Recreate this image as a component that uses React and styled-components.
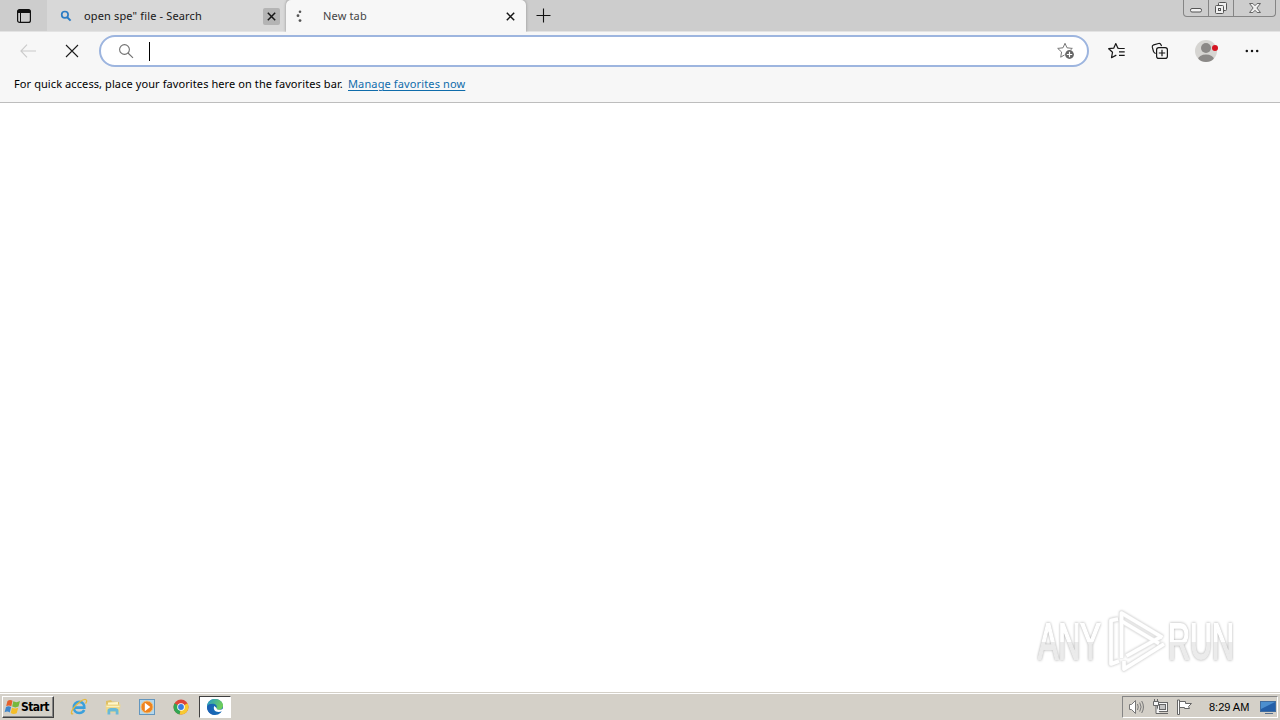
import React from "react";
import styled, { createGlobalStyle } from "styled-components";

const App = () => {
  return (
    <Screen>
      <GlobalStyle />
      <TabStrip>
        <TabActions>
          <TabMenuIcon />
        </TabActions>
        <Tab>
          <SearchFavicon />
          <TabTitle>open spe" file - Search</TabTitle>
          <CloseButton $hovered>
            <CrossIcon />
          </CloseButton>
        </Tab>
        <Tab $active>
          <Spinner />
          <TabTitle $active>New tab</TabTitle>
          <CloseButton>
            <CrossIcon />
          </CloseButton>
        </Tab>
        <NewTab>
          <PlusIcon />
        </NewTab>
        <WindowControls />
      </TabStrip>
      <Toolbar>
        <BackIcon />
        <StopIcon />
        <AddressBar>
          <MagnifierIcon />
          <Caret />
          <AddFavoriteIcon />
        </AddressBar>
        <ToolbarActions>
          <FavoritesIcon />
          <CollectionsIcon />
          <ProfileIcon />
          <MoreIcon />
        </ToolbarActions>
      </Toolbar>
      <FavoritesBar>
        <Hint>
          For quick access, place your favorites here on the favorites bar.
        </Hint>
        <ManageLink>Manage favorites now</ManageLink>
      </FavoritesBar>
      <Page>
        <Watermark>
          <WatermarkText>ANY</WatermarkText>
          <PlayLogo />
          <WatermarkText>RUN</WatermarkText>
        </Watermark>
      </Page>
      <Taskbar>
        <StartButton>
          <WindowsLogo />
          <StartLabel>Start</StartLabel>
        </StartButton>
        <QuickLaunch>
          <ExplorerIcon />
          <FolderIcon />
          <PlayerIcon />
          <ChromeIcon />
        </QuickLaunch>
        <TaskButton>
          <EdgeIcon />
        </TaskButton>
        <Tray>
          <SpeakerIcon />
          <NetworkIcon />
          <FlagIcon />
          <Clock>8:29 AM</Clock>
          <DesktopIcon />
        </Tray>
      </Taskbar>
    </Screen>
  );
};

export default App;

const TabMenuIcon = () => (
  <svg width="16" height="16" viewBox="0 0 16 16" fill="none">
    <rect x="1.6" y="1.6" width="12.8" height="12.8" rx="2" stroke="#111" strokeWidth="1.2" />
    <path d="M1.5 3.5a2 2 0 0 1 2-2h9a2 2 0 0 1 2 2V5h-13z" fill="#111" />
    <path d="M4.5 5v9" stroke="#111" />
  </svg>
);

const SearchFavicon = () => (
  <svg width="12" height="12" viewBox="0 0 12 12" fill="none" stroke="#2c7cc4">
    <circle cx="4.9" cy="4.7" r="3.2" strokeWidth="1.7" />
    <path d="M7.2 7.2l3.4 3.4" strokeWidth="2" />
  </svg>
);

const CrossIcon = () => (
  <svg width="9" height="9" viewBox="0 0 9 9" stroke="#161616" strokeWidth="1.5">
    <path d="M.8.8l7.4 7.4M8.2.8L.8 8.2" />
  </svg>
);

const Spinner = () => (
  <svg width="12" height="16" viewBox="0 0 12 16" fill="#555">
    <circle cx="5" cy="3.8" r="1.3" />
    <circle cx="3" cy="7.7" r="1.4" />
    <circle cx="5" cy="12.6" r="1.4" />
  </svg>
);

const PlusIcon = () => (
  <svg width="15" height="15" viewBox="0 0 15 15" stroke="#111" strokeWidth="1.1">
    <path d="M7.5.5v14M.5 7.5h14" />
  </svg>
);

const WindowControls = () => (
  <Controls>
    <ControlButton $width={24}>
      <svg width="14" height="16" viewBox="0 0 14 16">
        <rect x="1.5" y="8.5" width="11" height="3.5" rx="1.5" fill="#f2f2f2" stroke="#555" />
      </svg>
    </ControlButton>
    <ControlButton $width={25}>
      <svg width="14" height="16" viewBox="0 0 14 16" fill="#f0f0f0" stroke="#555">
        <rect x="4.5" y="2.5" width="8" height="8" rx="1" />
        <rect x="1.5" y="5.5" width="8" height="8" rx="1" />
        <rect x="4.5" y="8.5" width="2" height="2" />
      </svg>
    </ControlButton>
    <ControlButton $width={42}>
      <svg width="14" height="16" viewBox="0 0 14 16">
        <path
          d="M1.5 3.5h3.4L7 5.7l2.1-2.2h3.4L8.9 8l3.6 4.5H9.1L7 10.3l-2.1 2.2H1.5L5.1 8z"
          fill="#f0f0f0"
          stroke="#666"
        />
      </svg>
    </ControlButton>
  </Controls>
);

const BackIcon = () => (
  <svg width="16" height="14" viewBox="0 0 16 14" fill="none" stroke="#cacaca" strokeWidth="1.1">
    <path d="M7 .7L.9 7 7 13.3M1 7h15" />
  </svg>
);

const StopIcon = () => (
  <svg width="14" height="14" viewBox="0 0 14 14" stroke="#1c1c1c" strokeWidth="1.1">
    <path d="M1 1l12 12M13 1L1 13" />
  </svg>
);

const MagnifierIcon = () => (
  <svg width="16" height="16" viewBox="0 0 16 16" fill="none" stroke="#717171" strokeWidth="1.1">
    <circle cx="6.5" cy="6.5" r="4.9" />
    <path d="M10 10l5 4.8" />
  </svg>
);

const AddFavoriteIcon = () => (
  <svg width="18" height="18" viewBox="0 0 18 18" fill="none">
    <path
      d="M8 1.3l2 4.5 5.3.6-4 3.6.8 4.8L8 12.6l-4.3 2.6.9-5.2-3.9-3.6 5.3-.6z"
      stroke="#777"
      strokeLinejoin="round"
    />
    <circle cx="12.5" cy="12.5" r="5" fill="#fff" />
    <circle cx="12.5" cy="12.5" r="4.4" fill="#666" />
    <path d="M12.5 9.8v5.4M9.8 12.5h5.4" stroke="#fff" strokeWidth="1.2" />
  </svg>
);

const FavoritesIcon = () => (
  <svg width="18" height="18" viewBox="0 0 18 18" fill="none" stroke="#171717" strokeWidth="1.2">
    <path
      d="M11 6.4l-1.1-.2L7.8 1.5 5.7 6.2l-5 .5 3.8 3.6-1 5.4 4.8-2.6"
      strokeLinejoin="round"
    />
    <path d="M10.5 6.5h6.2M11 9.8h5.7M11 13.3h5.7" />
  </svg>
);

const CollectionsIcon = () => (
  <svg width="18" height="18" viewBox="0 0 18 18" fill="none" stroke="#171717" strokeWidth="1.2">
    <path d="M4.7 11.5C3.5 11.2 3 10.5 2.5 9.5L1.3 5.2C1 4 1.5 3.3 2.7 2.9L7.6 1.5c1.3-.3 2 .2 2.5 1.4l.4 1.2" />
    <rect x="5.6" y="5.6" width="10.8" height="10.8" rx="2.2" />
    <path d="M11 7.8v6.4M7.8 11h6.4" />
  </svg>
);

const ProfileIcon = () => (
  <svg width="24" height="24" viewBox="0 0 24 24">
    <defs>
      <clipPath id="avatar">
        <circle cx="11" cy="12" r="11" />
      </clipPath>
    </defs>
    <circle cx="11" cy="12" r="11" fill="#d6d5d2" />
    <g clipPath="url(#avatar)" fill="#8b8987">
      <circle cx="11" cy="9" r="5" />
      <ellipse cx="11" cy="20.5" rx="8" ry="5" />
    </g>
    <circle cx="20" cy="9" r="3" fill="#d51522" />
  </svg>
);

const MoreIcon = () => (
  <svg width="14" height="4" viewBox="0 0 14 4" fill="#151515">
    <circle cx="1.8" cy="2" r="1.25" />
    <circle cx="7" cy="2" r="1.25" />
    <circle cx="12.2" cy="2" r="1.25" />
  </svg>
);

const playLines = [
  "M14 13L7 14.5V58l8-3",
  "M60 38L20 63v-8",
  "M17.5 52V7L58.5 31.5",
  "M22.5 50l34-19",
  "M17.5 15L55 37.5",
];

const PlayLogo = () => (
  <PlaySvg width="64" height="68" viewBox="0 0 64 68" fill="none" strokeLinejoin="round">
    <g stroke="#e6e6e6" strokeWidth="5">
      {playLines.map((d) => (
        <path key={d} d={d} />
      ))}
    </g>
    <g stroke="#fff" strokeWidth="3.6">
      {playLines.map((d) => (
        <path key={d} d={d} />
      ))}
    </g>
  </PlaySvg>
);

const WindowsLogo = () => (
  <svg width="17" height="16" viewBox="0 0 17 16">
    <path d="M3.5 2C5.3.7 7 .9 8.5 1.800L7.300 7.200C5.600 6.200 4 6.200 2.200 7.100z" fill="#e5602b" />
    <path d="M9.3 2.3c2 1.1 4.2 1.2 6.700-.3l-1.500 5.600c-2.200 1.100-4.200 1-6.300 0z" fill="#76b83d" />
    <path d="M2 8c1.900-1 3.500-.8 5.100.1l-1.300 5.300c-1.700-1.100-3.300-1-5.200-.2z" fill="#3f86cb" />
    <path d="M8 8.700c2 1 4 1 6.200 0l-1.500 5.500c-2.200 1-4.100.9-6-.2z" fill="#f4bd28" />
  </svg>
);

const ExplorerIcon = () => (
  <svg width="18" height="18" viewBox="0 0 18 18" fill="none">
    <path
      d="M14.2 12c-1 2-2.7 3-4.9 3-3.4 0-5.500-2.300-5.500-5.500 0-3.200 2.200-5.600 5.500-5.600 3.300 0 5.200 2.400 5 5.700H5"
      stroke="#3aa0dc"
      strokeWidth="2.6"
    />
    <path
      d="M3.2 15.5C1 17 .8 14.5 2.8 11.2 6 6 13.5.3 16 1.7c1.2.7.6 2.4-.5 3.8"
      stroke="#e5b93c"
      strokeWidth="1.3"
    />
  </svg>
);

const FolderIcon = () => (
  <svg width="18" height="18" viewBox="0 0 18 18">
    <path d="M2 3l5-1 1 1.5 7 .5V14H2z" fill="#dfc065" />
    <path d="M4 4.5l10-.5v8H4z" fill="#fff6c9" />
    <path d="M1.5 6.5h15l-.8 8H2z" fill="#efd88a" />
    <path d="M2.5 8.5h13" stroke="#fbf0bd" />
    <path d="M3.5 16.5v-4c0-2 2-2.5 5.5-2.5s5.5.5 5.5 2.5v4h-2.8v-3H6.3v3z" fill="#68b9d8" />
  </svg>
);

const PlayerIcon = () => (
  <svg width="18" height="18" viewBox="0 0 18 18">
    <rect x="1.5" y="1.5" width="15" height="15" fill="#b4d7ec" stroke="#6396be" />
    <circle cx="9" cy="9" r="6" fill="#ee831e" stroke="#f5bd71" />
    <path d="M6.8 4.8l5.500 4.200-5.500 4.200z" fill="#fff" />
  </svg>
);

const ChromeIcon = () => (
  <svg width="18" height="18" viewBox="0 0 18 18">
    <circle cx="9" cy="9" r="7.5" fill="#dd4538" />
    <path d="M9 9l-6.5-3.7a7.5 7.5 0 0 0 5.2 11.1z" fill="#31a653" />
    <path d="M9 9l6.5-3.7A7.5 7.5 0 0 1 7.7 16.4z" fill="#f7ca31" />
    <circle cx="9" cy="9" r="3.8" fill="#fff" />
    <circle cx="9" cy="9" r="2.9" fill="#397de0" />
  </svg>
);

const EdgeIcon = () => (
  <svg width="18" height="18" viewBox="0 0 18 18">
    <defs>
      <linearGradient id="edge" x1="0" y1="0" x2="1" y2=".4">
        <stop stopColor="#2198d1" />
        <stop offset="1" stopColor="#6fcf59" />
      </linearGradient>
    </defs>
    <circle cx="9" cy="9" r="8" fill="#1669b5" />
    <path
      d="M1 9C1 4.5 4.3 1 9 1c4.8 0 8 3.1 8 6.6 0 2.8-2 4.2-4.3 4.2-1.8 0-3-.7-2.2-1.9.7-1.3.2-3.3-2-4C5.5 5 2 6.5 1 9z"
      fill="url(#edge)"
    />
    <path
      d="M8.3 8c-1.5 3 .7 6 4.2 6 1.4 0 2.4-.4 3.3-.8l1.2 2h1l-1-4.500c-2 1.500-6.500 1.700-6.500-.8z"
      fill="#fff"
    />
    <path d="M1 9c.5-2.3 3-3.5 5.5-2.8C4 8 4.3 14 9.5 17 4.5 17.3 1 13.5 1 9z" fill="#1b62b4" />
  </svg>
);

const SpeakerIcon = () => (
  <svg width="18" height="16" viewBox="0 0 18 16" fill="none" stroke="#777">
    <path d="M1.5 5.5h2l4-4v13l-4-4h-2z" fill="#fff" />
    <path d="M9.5 5q1.5 3 0 6M11.7 3.5q2.8 4.5 0 9M13.7 2q3.5 6 0 12" />
  </svg>
);

const NetworkIcon = () => (
  <svg width="18" height="16" viewBox="0 0 18 16" fill="#f7f7f7" stroke="#666">
    <rect x="5.5" y="3.5" width="10" height="9" />
    <rect x="7.5" y="5.5" width="6" height="5" fill="#c4c4c4" />
    <path d="M8 14.5h8M2.5 0v3M5.5 0v3M1.5 2.5h5v4h-5zM4 7v7.5h4" />
  </svg>
);

const FlagIcon = () => (
  <svg width="18" height="16" viewBox="0 0 18 16" fill="#fff" stroke="#666">
    <path d="M1.5 1v14.5h2V1zM3.5 2.5h6v2h6l-3 3 1 2h-5v-1h-5z" />
  </svg>
);

const DesktopIcon = () => (
  <svg width="16" height="16" viewBox="0 0 16 16">
    <rect x=".5" y="2.5" width="15" height="10" fill="#245fa8" stroke="#416d9f" />
    <path d="M1 3h14L1 10z" fill="#4c8fcf" />
    <path d="M5 14.5h8" stroke="#566f8d" />
  </svg>
);

const GlobalStyle = createGlobalStyle`
  * {
    box-sizing: border-box;
  }

  body {
    margin: 0;
    overflow: hidden;
  }

  svg {
    display: block;
    flex-shrink: 0;
  }
`;

const Screen = styled.div`
  display: flex;
  flex-direction: column;
  width: 1280px;
  height: 720px;
  background: #fff;
  color: #000;
  font-family: "Noto Sans", sans-serif;
  font-size: 11px;
  white-space: nowrap;
`;

const TabStrip = styled.div`
  display: flex;
  height: 32px;
  background: #cdcdcd;
  border-bottom: 1px solid #e3e3e3;
`;

const TabActions = styled.div`
  display: flex;
  width: 47px;
  padding: 8px 0 0 16px;
`;

const Tab = styled.div`
  display: flex;
  align-items: center;
  width: ${({ $active }) => ($active ? "240px" : "239px")};
  height: ${({ $active }) => ($active ? "32px" : "31px")};
  padding: ${({ $active }) => ($active ? "0 7px 0 9px" : "1px 6px 0 13px")};
  background: ${({ $active }) => ($active ? "#f7f7f7" : "#d8d8d8")};
  border-radius: ${({ $active }) => ($active ? "5px 5px 0 0" : "0")};
  box-shadow: ${({ $active }) => ($active ? "0 0 3px #8d8d8d" : "none")};
  clip-path: inset(0 -3px 0 -3px);
`;

const TabTitle = styled.span`
  flex: 1;
  margin-left: ${({ $active }) => ($active ? "16px" : "12px")};
  padding-bottom: 2px;
  color: ${({ $active }) => ($active ? "#444" : "#171717")};
  letter-spacing: 0.15px;
`;

const CloseButton = styled.div`
  display: grid;
  place-items: center;
  width: 17px;
  height: 17px;
  border-radius: 2px;
  background: ${({ $hovered }) => ($hovered ? "#b4b4b4" : "transparent")};
`;

const NewTab = styled.div`
  padding: 8px 0 0 10px;
`;

const Controls = styled.div`
  display: flex;
  height: 17px;
  margin: 0 4px 0 auto;
  border: 1px solid #858585;
  border-top: 0;
  border-radius: 0 0 4px 4px;
`;

const ControlButton = styled.div`
  display: flex;
  justify-content: center;
  width: ${({ $width }) => $width}px;

  & + & {
    border-left: 1px solid #858585;
  }
`;

const Toolbar = styled.div`
  display: flex;
  align-items: center;
  height: 38px;
  padding-left: 20px;
  background: #f7f7f7;

  > svg + svg {
    margin-left: 29px;
  }
`;

const AddressBar = styled.div`
  display: flex;
  align-items: center;
  width: 990px;
  height: 32px;
  margin-left: 20px;
  padding: 0 12px 0 17px;
  border: 2px solid #9db5df;
  border-radius: 16px;
  background: #fff;

  > svg:last-child {
    margin-left: auto;
  }
`;

const Caret = styled.div`
  width: 1px;
  height: 19px;
  margin-left: 15px;
  background: #000;
`;

const ToolbarActions = styled.div`
  display: flex;
  align-items: center;
  gap: 26px;
  margin-left: 19px;

  > svg:nth-child(2) {
    margin-left: -1px;
  }
`;

const FavoritesBar = styled.div`
  display: flex;
  height: 33px;
  padding: 6px 14px 0;
  background: #f7f7f7;
  border-bottom: 1px solid #bdbdbd;
`;

const Hint = styled.span`
  width: 334px;
  letter-spacing: 0.09px;
`;

const ManageLink = styled.span`
  color: #0f6cab;
  letter-spacing: 0.13px;
  text-decoration: underline;
  text-underline-offset: 2px;
`;

const Page = styled.main`
  display: flex;
  flex: 1;
  justify-content: flex-end;
  align-items: flex-end;
  padding: 0 46px 18px 0;
`;

const Watermark = styled.div`
  display: flex;
  align-items: center;
  height: 68px;
`;

const WatermarkText = styled.span`
  box-sizing: content-box;
  width: 66px;
  margin-right: -50px;
  padding: 4px 50px 0 0;
  font-family: "Liberation Sans", sans-serif;
  font-size: 50px;
  line-height: 56px;
  transform: scaleX(0.61);
  transform-origin: left;
  background: linear-gradient(#fff 54%, #ebebeb 54%);
  background-clip: text;
  -webkit-text-fill-color: transparent;
  -webkit-text-stroke: 2px transparent;
  filter: drop-shadow(0 0 1.5px #aaa);
`;

const PlaySvg = styled.svg`
  filter: drop-shadow(0 0 1px #ccc);
`;

const Taskbar = styled.footer`
  display: flex;
  align-items: center;
  height: 28px;
  padding: 0 2px;
  background: #d4d0c8;
  border-top: 1px solid #d4d0c8;
  box-shadow: inset 0 1px #fff;
  font-family: "Liberation Sans", sans-serif;
`;

const StartButton = styled.div`
  display: flex;
  align-items: center;
  width: 52px;
  height: 22px;
  padding-left: 1px;
  border: 1px solid;
  border-color: #fff #404040 #404040 #fff;
  box-shadow: inset -1px -1px #858585;
`;

const StartLabel = styled.span`
  color: #000;
  font-family: "DejaVu Sans Condensed", "DejaVu Sans", sans-serif;
  font-size: 12px;
  font-weight: bold;
  letter-spacing: -0.55px;
`;

const QuickLaunch = styled.div`
  display: flex;
  gap: 16px;
  margin-left: 16px;
`;

const TaskButton = styled.div`
  display: grid;
  place-items: center;
  width: 32px;
  height: 22px;
  margin-left: 9px;
  border: 1px solid;
  border-color: #404040 #fff #fff #404040;
  background: #fff;
`;

const Tray = styled.div`
  display: flex;
  align-items: center;
  width: 156px;
  height: 22px;
  margin-left: auto;
  padding-left: 5px;
  border: 1px solid;
  border-color: #858585 #fff #fff #858585;

  > svg + svg {
    margin-left: 6px;
  }
`;

const Clock = styled.span`
  width: 51px;
  margin-left: 15px;
  color: #000;
  font-size: 11px;
`;
